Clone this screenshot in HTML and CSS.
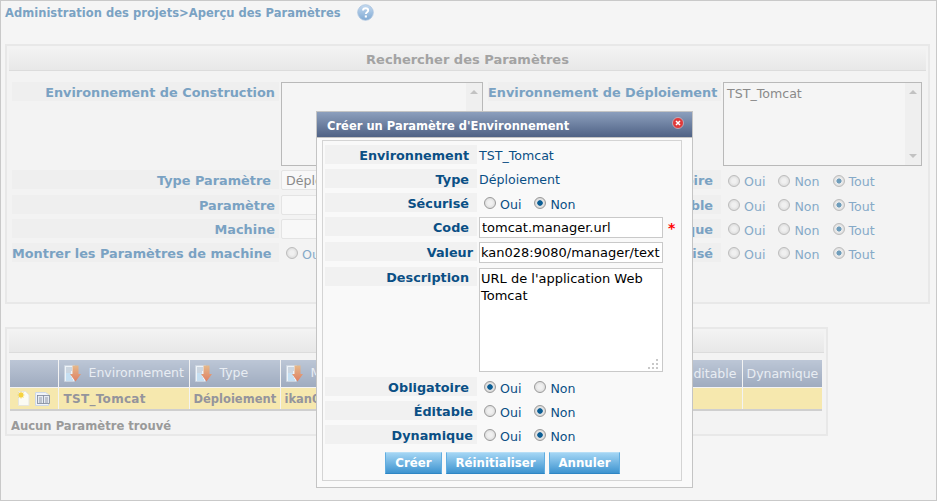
FILE: index.html
```html
<!DOCTYPE html>
<html lang="fr">
<head>
    <meta charset="UTF-8">
    <title>Aperçu des Paramètres</title>
    <link rel="stylesheet" href="styles.css">
</head>
<body>
    <div class="page">
        <!-- Fil d'ariane -->
        <div class="breadcrumb">
            <span>Administration des projets&gt;Aperçu des Paramètres</span>
            <svg class="help-icon" width="17" height="17" viewBox="0 0 17 17">
                <defs>
                    <linearGradient id="helpFill" x1="0" y1="0" x2="0" y2="1">
                        <stop offset="0" stop-color="#c5daf0"/>
                        <stop offset="1" stop-color="#7fa9d3"/>
                    </linearGradient>
                </defs>
                <circle cx="8.5" cy="8.5" r="7.8" fill="url(#helpFill)" stroke="#a9c3de" stroke-width="0.8"/>
                <path d="M6 6.6c0-1.6 1.2-2.4 2.6-2.4s2.6.8 2.6 2.2c0 1.900-2.300 1.900-2.300 3.700" fill="none" stroke="#fff" stroke-width="1.9"/>
                <rect x="7.8" y="11.4" width="2.1" height="2.1" fill="#fff"/>
            </svg>
        </div>

        <!-- Recherche -->
        <section class="panel search-panel">
            <h3 class="panel-title">Rechercher des Paramètres</h3>
            <div class="search-grid">
                <div class="label">Environnement de Construction</div>
                <div class="listbox listbox-left">
                    <div class="scrollbar"><i class="arrow-up"></i><i class="arrow-down"></i></div>
                </div>
                <div class="label">Environnement de Déploiement</div>
                <div class="listbox">TST_Tomcat
                    <div class="scrollbar"><i class="arrow-up"></i><i class="arrow-down"></i></div>
                </div>

                <div class="label pad">Type Paramètre</div>
                <div class="fake-input">Déploiement</div>
                <div class="label pad">Obligatoire</div>
                <div class="radios">
                    <label><input type="radio" name="r1">Oui</label>
                    <label><input type="radio" name="r1">Non</label>
                    <label><input type="radio" name="r1" checked>Tout</label>
                </div>

                <div class="label">Paramètre</div>
                <div class="fake-input"></div>
                <div class="label pad">Éditable</div>
                <div class="radios">
                    <label><input type="radio" name="r2">Oui</label>
                    <label><input type="radio" name="r2">Non</label>
                    <label><input type="radio" name="r2" checked>Tout</label>
                </div>

                <div class="label">Machine</div>
                <div class="fake-input"></div>
                <div class="label pad">Dynamique</div>
                <div class="radios">
                    <label><input type="radio" name="r3">Oui</label>
                    <label><input type="radio" name="r3">Non</label>
                    <label><input type="radio" name="r3" checked>Tout</label>
                </div>

                <div class="label pad">Montrer les Paramètres de machine</div>
                <div class="radios">
                    <label><input type="radio" name="r4">Oui</label>
                </div>
                <div class="label pad">Sécurisé</div>
                <div class="radios">
                    <label><input type="radio" name="r5">Oui</label>
                    <label><input type="radio" name="r5">Non</label>
                    <label><input type="radio" name="r5" checked>Tout</label>
                </div>
            </div>
        </section>

        <!-- Résultats -->
        <section class="panel results-panel">
            <div class="panel-title"></div>
            <table class="results">
                <colgroup>
                    <col class="c-actions"><col class="c-env"><col class="c-type"><col class="c-machine"><col class="c-rest"><col class="c-edit"><col class="c-dyn">
                </colgroup>
                <thead>
                    <tr>
                        <th></th>
                        <th><svg class="sort-icon" viewBox="0 0 17 17"><use href="#sortDoc"/></svg>Environnement</th>
                        <th><svg class="sort-icon" viewBox="0 0 17 17"><use href="#sortDoc"/></svg>Type</th>
                        <th><svg class="sort-icon" viewBox="0 0 17 17"><use href="#sortDoc"/></svg>Machine</th>
                        <th></th>
                        <th class="plain">Éditable</th>
                        <th class="plain">Dynamique</th>
                    </tr>
                </thead>
                <tbody>
                    <tr>
                        <td class="actions">
                            <svg width="13" height="15" viewBox="0 0 13 15">
                                <path d="M1.5.5h7l3.5 3.500v10.500h-10.500z" fill="#fbfbf4" stroke="#e6e6df"/>
                                <path d="M4 0l.8 2 2-.8-.9 2 2 .8-2 .8.9 2-2-.8-.8 2-.8-2-2 .8.9-2-2-.8 2-.8-.9-2 2 .8z" fill="#f6d23f"/>
                            </svg>
                            <svg width="16" height="14" viewBox="0 0 16 14">
                                <path d="M.5.5h10l3 2v11h-13z" fill="#f0f3f8" stroke="#cdd8e8"/>
                                <rect x="2.500" y="3.500" width="12" height="8" fill="#e6ebf3" stroke="#7d8798" stroke-width="0.800"/>
                                <path d="M8.500 3.500v8M4 6h3M4 8h3M4 10h3M10 6h3M10 8h3M10 10h3" stroke="#7d8798" stroke-width="0.800"/>
                            </svg>
                        </td>
                        <td class="cell-env">TST_Tomcat</td>
                        <td>Déploiement</td>
                        <td>ikan028</td>
                        <td></td>
                        <td></td>
                        <td></td>
                    </tr>
                </tbody>
            </table>
            <p class="no-result">Aucun Paramètre trouvé</p>
        </section>

        <svg class="defs" width="0" height="0">
            <defs>
                <linearGradient id="arrowFill" x1="0" y1="0" x2="0" y2="1">
                    <stop offset="0" stop-color="#e6b98a"/>
                    <stop offset="1" stop-color="#de7f63"/>
                </linearGradient>
                <g id="sortDoc">
                    <rect x="0.500" y="0.500" width="10" height="16" fill="#eef3f8" stroke="#c9d3de" stroke-width="0.600"/>
                    <path d="M2 3h6M2 5h6M2 7h5" stroke="#a8b8c9"/>
                    <path d="M2 9h5M2 11h5M2 13h6M2 15h7" stroke="#9ccbec"/>
                    <path d="M8.500.5h6v8.500h2.500l-5.500 7.500-5.500-7.500h2.500z" fill="url(#arrowFill)"/>
                </g>
            </defs>
        </svg>

        <!-- Fenêtre de création -->
        <div class="modal">
            <div class="modal-title">
                <span>Créer un Paramètre d'Environnement</span>
                <svg class="close-icon" width="12" height="12" viewBox="0 0 12 12">
                    <circle cx="6" cy="6" r="5.500" fill="#e03a3a" stroke="#c9c9d6" stroke-width="0.700"/>
                    <path d="M4 4l4 4M8 4l-4 4" stroke="#fff" stroke-width="1.500"/>
                </svg>
            </div>
            <div class="modal-body">
                <div class="modal-form">
                    <div class="m-label pad">Environnement</div>
                    <div class="m-value">TST_Tomcat</div>

                    <div class="m-label pad">Type</div>
                    <div class="m-value">Déploiement</div>

                    <div class="m-label pad">Sécurisé</div>
                    <div class="m-radios">
                        <label><input type="radio" name="m1">Oui</label>
                        <label><input type="radio" name="m1" checked>Non</label>
                    </div>

                    <div class="m-label pad">Code</div>
                    <div class="m-field">
                        <input class="m-input" type="text" value="tomcat.manager.url">
                        <span class="required">*</span>
                    </div>

                    <div class="m-label">Valeur</div>
                    <div class="m-field">
                        <input class="m-input tight" type="text" value="kan028:9080/manager/text">
                    </div>

                    <div class="m-label pad">Description</div>
                    <div class="m-field area-wrap">
                        <textarea class="m-area">URL de l'application Web Tomcat</textarea>
                        <svg class="grip" width="12" height="12" viewBox="0 0 12 12">
                            <path d="M8 0h2v2h-2zM4 4h2v2h-2zM8 4h2v2h-2zM0 8h2v2h-2zM4 8h2v2h-2zM8 8h2v2h-2z" fill="#c8c8c8"/>
                        </svg>
                    </div>

                    <div class="m-label pad">Obligatoire</div>
                    <div class="m-radios">
                        <label><input type="radio" name="m2" checked>Oui</label>
                        <label><input type="radio" name="m2">Non</label>
                    </div>

                    <div class="m-label">Éditable</div>
                    <div class="m-radios">
                        <label><input type="radio" name="m3">Oui</label>
                        <label><input type="radio" name="m3" checked>Non</label>
                    </div>

                    <div class="m-label">Dynamique</div>
                    <div class="m-radios">
                        <label><input type="radio" name="m4">Oui</label>
                        <label><input type="radio" name="m4" checked>Non</label>
                    </div>
                </div>
                <div class="m-buttons">
                    <button class="btn btn-create">Créer</button>
                    <button class="btn btn-reset">Réinitialiser</button>
                    <button class="btn btn-cancel">Annuler</button>
                </div>
            </div>
        </div>
    </div>
</body>
</html>
```
FILE: styles.css
```css
/* Page */
html, body {
    margin: 0;
    height: 100%;
}

body {
    font-family: "DejaVu Sans", sans-serif;
    font-size: 12.6px;
    background-color: #f5f5f5;
    overflow: hidden;
}

.page {
    position: relative;
    box-sizing: border-box;
    width: 937px;
    height: 501px;
    padding: 0 7px 0 4px;
    border: 1px solid #c9c9c9;
}

.defs {
    position: absolute;
}

/* Fil d'ariane */
.breadcrumb {
    display: flex;
    align-items: center;
    height: 43px;
    padding-bottom: 20px;
    box-sizing: border-box;
    color: #7aa2c3;
    font-size: 11.5px;
    font-weight: bold;
    letter-spacing: 0.03px;
}

.help-icon {
    margin-left: 16px;
}

/* Panneaux */
.panel {
    box-sizing: border-box;
    background-color: #f3f3f3;
    border: 2px solid #e8e8e8;
    padding: 3px 2px 0;
}

.search-panel {
    width: 925px;
    height: 260px;
}

.results-panel {
    width: 823px;
    height: 109px;
    margin-top: 23px;
    padding-top: 2px;
}

.panel-title {
    margin: 0;
    height: 21px;
    line-height: 21px;
    text-align: center;
    font-size: 13px;
    color: #a3a3a3;
    background: linear-gradient(#f2f2f2, #e8e8e8);
    border-bottom: 1px solid #dcdcdc;
}

/* Grille de recherche */
.search-grid {
    display: grid;
    grid-template-columns: 269px 207px 235px 199px;
    grid-template-rows: 83px 20px repeat(3, 19px);
    gap: 5px 0;
    margin: 11px 0 0 3px;
}

.label {
    height: 19px;
    line-height: 21px;
    margin-right: 2px;
    padding-right: 4px;
    text-align: right;
    white-space: nowrap;
    color: #7aa2c3;
    font-size: 12.85px;
    font-weight: bold;
    background-color: #efefef;
}

.label.pad {
    padding-right: 8px;
}

.listbox {
    position: relative;
    box-sizing: border-box;
    height: 84px;
    padding: 3px;
    border: 1px solid #b9b9b9;
    color: #8a8a8a;
    background-color: #f5f5f5;
}

.listbox-left {
    margin-right: 5px;
}

.scrollbar {
    position: absolute;
    top: 0;
    right: 0;
    bottom: 0;
    width: 16px;
    background-color: #efefef;
}

.arrow-up,
.arrow-down {
    position: absolute;
    left: 4px;
    border-left: 4px solid transparent;
    border-right: 4px solid transparent;
}

.arrow-up {
    top: 7px;
    border-bottom: 4px solid #c2c2c2;
}

.arrow-down {
    bottom: 7px;
    border-top: 4px solid #c2c2c2;
}

.fake-input {
    box-sizing: border-box;
    height: 20px;
    margin-right: 5px;
    padding: 2px 4px;
    color: #8a8a8a;
    border: 1px solid #e4e4e4;
    border-radius: 2px;
    background-color: #f8f8f8;
}

.radios {
    display: flex;
    align-items: center;
    gap: 13px;
    padding: 3px 0 0 5px;
    color: #86aac8;
}

.radios label,
.m-radios label {
    display: flex;
    align-items: center;
}

/* Boutons radio */
input[type="radio"] {
    appearance: none;
    box-sizing: border-box;
    width: 12px;
    height: 12px;
    margin: 0 4px 2px 0;
    border: 1px solid #bcbcbc;
    border-radius: 50%;
    background: radial-gradient(#f0f0f0 30%, #d2d2d2);
}

.radios input[type="radio"]:checked {
    background: radial-gradient(#6f9dbb 32%, #ededed 40%, #cfcfcf);
}

.m-radios input[type="radio"] {
    border-color: #9a9a9a;
}

.m-radios input[type="radio"]:checked {
    background: radial-gradient(#0b5d94 34%, #e8e8e8 44%, #c2c2c2);
}

/* Tableau de résultats */
.results {
    width: 812px;
    margin: 7px 0 0 1px;
    border-collapse: collapse;
    table-layout: fixed;
    border-bottom: 2px solid #cfcfcf;
}

.c-actions { width: 48px; }
.c-env { width: 131px; }
.c-type { width: 91px; }
.c-machine { width: 200px; }
.c-rest { width: 201px; }
.c-edit { width: 61px; }
.c-dyn { width: 80px; }

.results th {
    height: 27px;
    padding: 0 0 0 5px;
    text-align: left;
    white-space: nowrap;
    overflow: hidden;
    font-weight: normal;
    font-size: 12.5px;
    color: #e8edf3;
    background: linear-gradient(#bcc6d6, #9fabbf);
    border-right: 1px solid #f3f3f3;
    border-bottom: 1px solid #f3f3f3;
}

.results th:last-child,
.results td:last-child {
    border-right: none;
}

.results th.plain {
    padding-left: 4px;
}

.results td {
    height: 21px;
    padding: 0 0 0 4px;
    white-space: nowrap;
    overflow: hidden;
    color: #94949c;
    font-size: 11.5px;
    font-weight: bold;
    background-color: #f6e8ae;
    border-right: 1px solid #f3f3f3;
}

.results td.cell-env {
    padding-left: 5px;
    font-size: 12px;
    letter-spacing: 0.3px;
}

.sort-icon {
    width: 17px;
    height: 17px;
    margin-right: 8px;
    vertical-align: middle;
}

.results td.actions {
    padding-left: 7px;
}

.actions svg {
    vertical-align: middle;
    margin-right: 1px;
}

.no-result {
    margin: 8px 0 0 2px;
    color: #9a9a9a;
    font-size: 11.6px;
    font-weight: bold;
}

/* Fenêtre de création */
.modal {
    position: absolute;
    top: 110px;
    left: 315px;
    box-sizing: border-box;
    width: 377px;
    height: 377px;
    background-color: #fafafa;
    border: 1px solid #c4c4c4;
}

.modal-title {
    display: flex;
    align-items: center;
    justify-content: space-between;
    box-sizing: content-box;
    height: 22px;
    padding: 3px 4px 0 10px;
    color: #fff;
    font-size: 11.5px;
    font-weight: bold;
    background: linear-gradient(#8c9fbd, #4f6285);
    border-bottom: 1px solid #c4c4c4;
}

.close-icon {
    margin-top: -6px;
    margin-right: 4px;
}

.modal-body {
    box-sizing: border-box;
    width: 360px;
    height: 341px;
    margin: 2px 0 0 5px;
    padding: 4px 2px;
    border: 1px solid #d4d4d4;
    background-color: #f9f9f9;
}

.modal-form {
    display: grid;
    grid-template-columns: 152px 1fr;
    grid-template-rows: 19px 19px 19px 20px 20px 105px 19px 19px 19px;
    gap: 5px 2px;
}

.m-label {
    height: 19px;
    line-height: 21px;
    padding-right: 4px;
    text-align: right;
    color: #0a4f85;
    font-size: 12.8px;
    font-weight: bold;
    background-color: #f1f1f1;
}

.m-label.pad {
    padding-right: 8px;
}

.m-value {
    line-height: 21px;
    color: #0a4f85;
}

.m-radios {
    display: flex;
    align-items: center;
    gap: 13px;
    padding: 3px 0 0 5px;
    color: #0a4f85;
}

.m-field {
    position: relative;
    display: flex;
    align-items: flex-start;
}

.m-input {
    box-sizing: border-box;
    width: 184px;
    height: 21px;
    padding: 0 2px;
    font-family: "DejaVu Sans", sans-serif;
    font-size: 13px;
    color: #000;
    background-color: #fff;
    border: 1px solid #c9c9c9;
    border-radius: 0;
    outline: none;
}

.m-input.tight {
    padding: 0 1px;
}

.required {
    margin: 3px 0 0 5px;
    color: #f00;
    font-size: 14px;
    line-height: 16px;
    font-weight: bold;
}

.area-wrap {
    padding-top: 1px;
}

.m-area {
    box-sizing: border-box;
    width: 184px;
    height: 104px;
    padding: 1px;
    font-family: "DejaVu Sans", sans-serif;
    font-size: 13px;
    line-height: 17px;
    color: #000;
    background-color: #fff;
    border: 1px solid #c9c9c9;
    border-radius: 0;
    outline: none;
    resize: none;
}

.grip {
    position: absolute;
    left: 169px;
    bottom: 1px;
}

.m-buttons {
    display: flex;
    justify-content: flex-start;
    gap: 4px;
    margin: 8px 0 0 60px;
}

.btn {
    height: 22px;
    padding: 0;
    color: #fff;
    font-family: "DejaVu Sans", sans-serif;
    font-size: 11.8px;
    font-weight: bold;
    background: linear-gradient(#a3d5f4, #3e94d0);
    border: 1px solid #61ade0;
    border-top-color: #b6def6;
    border-bottom-color: #2f86c4;
}

.btn-create { width: 57px; }
.btn-reset { width: 99px; }
.btn-cancel { width: 71px; }
```
